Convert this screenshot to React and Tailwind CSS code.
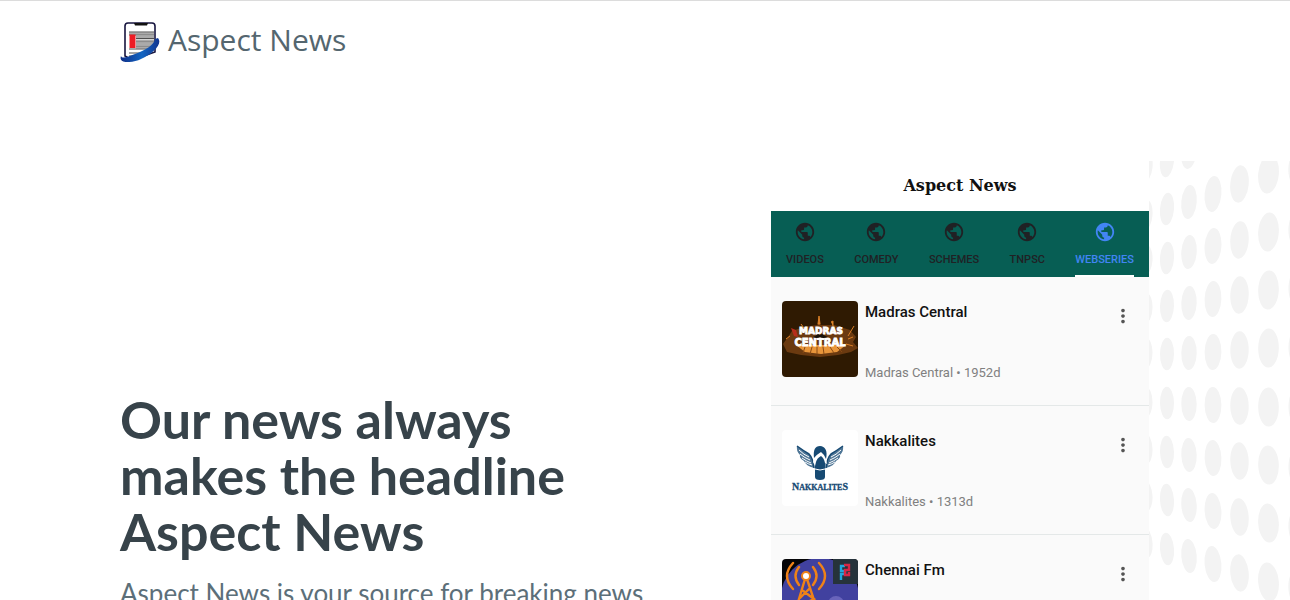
import { MdMoreVert, MdPublic } from "react-icons/md";

const tabs = ["VIDEOS", "COMEDY", "SCHEMES", "TNPSC", "WEBSERIES"];

const dotColumns = [
  { x: -3, rx: 6.5, ry: 15, ys: [6, 54, 99, 147, 192, 241, 288, 335, 382] },
  { x: 18, rx: 7, ry: 16.3, ys: [0, 48, 97, 145, 193, 242, 291, 339, 388] },
  { x: 40, rx: 7.7, ry: 17, ys: [-9, 41, 91, 142, 192, 243, 294, 344, 395] },
  { x: 64, rx: 8.4, ry: 18, ys: [33, 85, 138, 191, 244, 297, 350, 403] },
  { x: 90.5, rx: 9.2, ry: 18.7, ys: [23, 79, 134, 189, 245, 300, 356, 412] },
  { x: 119.5, rx: 10.3, ry: 19.6, ys: [13, 71, 129, 187, 246, 304, 362, 421] },
  { x: 151, rx: 11.5, ry: 21, ys: [6, 67, 126, 186, 246, 307, 367, 428] },
];

function Logo() {
  return (
    <svg viewBox="0 0 40 40" className="size-10 shrink-0" aria-hidden="true">
      <path d="M5 34V4q0-3 3-3h24q3 0 3 3v26L12 38Z" fill="#fff" stroke="#17153f" strokeWidth="1.6" />
      <path d="M14 1h14l-1 2.5H15Z" fill="#111" />
      <path d="M9 11.5h25M16 15h18M16 18.5h18M16 22h18M16 25.5h18" stroke="#aaa" strokeWidth="2" />
      <path d="M9 10h25M9 13h25M16 16.5h18M16 20h18M16 24h18M9 27h25M9 31h15M9 34h8" stroke="#222" strokeWidth=".8" />
      <path d="M9.5 12.5h6V26h-6Z" fill="#ed1c24" />
      <path
        d="M1 34c1 3 7 1 14-2 11-4 19-9 20-15l3-1c5 6-5 16-17 21C13 41-2 42 1 34Z"
        fill="url(#swoosh)"
      />
      <defs>
        <linearGradient id="swoosh">
          <stop stopColor="#102f88" />
          <stop offset=".55" stopColor="#1265c2" />
          <stop offset="1" stopColor="#12358f" />
        </linearGradient>
      </defs>
    </svg>
  );
}

function MadrasThumb() {
  return (
    <svg viewBox="0 0 76 76" className="size-[76px] rounded-sm" aria-hidden="true">
      <rect width="76" height="76" fill="#2f1a02" />
      <path d="m1 43 5-7 4-6 12-4 13-2 2-4 2 4 13 0 16 5 6 7-3 5 5 6-7 4-13 3-18 2-19-2-14-3Z" fill="#6b3a10" />
      <path d="M14 44h50l-9 7-16 2-16-2Z" fill="#e8953a" />
      <path d="m23 46-2 6m9-6-2 7m7-7v7m6-7 1 7m6-7 4 6m3-6 5 5" stroke="#8a4a14" strokeWidth="1" />
      <path d="m37 15 1 8h-2Zm12 6 2-1v5m-32-2 3 4m50-2-6 10M4 38l4-3m58 3 5-2m-7 7 7 2" stroke="#d97f27" strokeWidth="1" fill="#e48b2e" />
      <path d="m9 27 5 2 2 7-4-1Z" fill="#b52d1b" />
      <g fontFamily="DejaVu Sans, sans-serif" fontWeight="700" fill="#fff" stroke="#fff" strokeWidth=".8" textAnchor="middle">
        <text x="39" y="33" fontSize="9">MADRAS</text>
        <text x="38" y="45" fontSize="10">CENTRAL</text>
      </g>
      <path d="M31 36q3-1 5-3l2 1 2-1q3 2 6 3-5 2-8 0-3 2-7 0" fill="#17100a" />
    </svg>
  );
}

function NakkalitesThumb() {
  return (
    <svg viewBox="0 0 76 76" className="size-[76px] rounded-sm" aria-hidden="true">
      <rect width="76" height="76" fill="#fff" />
      <path d="M15 16q7 5 12 8 4 4 5 14-8-2-10-7-5-3-4-6-4-4-3-9ZM61 16q-7 5-12 8-4 4-5 14 8-2 10-7 5-3 4-6 4-4 3-9Z" fill="#4f7696" />
      <path
        d="M17 20q5 5 10 7M18 24q5 4 10 6M20 28q4 3 9 5M23 32q3 2 7 3M59 20q-5 5-10 7M58 24q-5 4-10 6M56 28q-4 3-9 5M53 32q-3 2-7 3"
        fill="none"
        stroke="#fff"
      />
      <path
        d="M15 16q7 5 12 8 4 4 5 14M61 16q-7 5-12 8-4 4-5 14"
        fill="none"
        stroke="#174a73"
        strokeWidth="1.5"
      />
      <path d="M32 28c-1-8 1-12 6-12s8 5 6 13l-1 11v7q0 3-5 3t-5-3v-7Z" fill="#174a73" />
      <path d="m31 32 1-4q2-3 7-6 4 3 5 7l1 5-2-1q-1-5-4-7-4 2-5 6l-1 4Z" fill="#fff" />
      <path d="M33 39q5 2 10 0" fill="none" stroke="#fff" />
      <text x="38" y="60" fontSize="8" fontFamily="Liberation Serif, serif" fontWeight="700" fill="#174a73" stroke="#174a73" strokeWidth=".3" textAnchor="middle">
        <tspan fontSize="10">N</tspan>AKKALITE<tspan fontSize="10">S</tspan>
      </text>
    </svg>
  );
}

function ChennaiThumb() {
  return (
    <svg viewBox="0 0 76 76" className="size-[76px] rounded-sm" aria-hidden="true">
      <rect width="76" height="76" fill="#050508" />
      <circle cx="38" cy="38" r="39" fill="#41419f" />
      <circle cx="54" cy="45" r="8" fill="#6964bb" />
      <path d="M51 0h25v25H51Z" fill="#26333b" />
      <path d="M63 7h-4v5h4v3h-4v6" fill="none" stroke="#20a8dc" strokeWidth="2.4" />
      <path d="M62 6h5v5h-4v5h4v-3" fill="none" stroke="#d72645" strokeWidth="2.4" />
      <g fill="none" stroke="#ef8218" strokeWidth="2.4" strokeLinecap="round">
        <path d="M11 4q-12 13 0 26M17 8q-7 9 0 18M37 4q12 13 0 26M31 8q7 9 0 18" />
        <path d="m23 20-9 30m11-30 10 30M20 31l12 9-15 7M28 29l-10 10" />
      </g>
      <circle cx="24" cy="17" r="4" fill="#fff" stroke="#ef8218" strokeWidth="2" />
    </svg>
  );
}

const channels = [
  { name: "Madras Central", age: "1952d", Thumb: MadrasThumb },
  { name: "Nakkalites", age: "1313d", Thumb: NakkalitesThumb },
  { name: "Chennai Fm", Thumb: ChennaiThumb },
];

function Phone() {
  return (
    <section className="w-[378px] shrink-0 bg-[#fafafa] font-['Roboto',sans-serif]">
      <h2 className="bg-white py-[11px] text-center font-['DejaVu_Serif',serif] text-base leading-7 font-bold text-[#111]">
        Aspect News
      </h2>
      <nav className="flex justify-between bg-[#075e54] px-[15px]">
        {tabs.map((tab) => (
          <button
            key={tab}
            className={
              tab === "WEBSERIES"
                ? "flex h-[66px] flex-col items-center border-b-2 border-white pt-[10px] text-[11px] leading-[18px] font-medium text-[#4285f4]"
                : "flex h-[66px] flex-col items-center border-b-2 border-transparent pt-[10px] text-[11px] leading-[18px] font-medium text-[#202124]"
            }
          >
            <MdPublic className="mb-2 size-[22px]" />
            {tab}
          </button>
        ))}
      </nav>
      <ul>
        {channels.map(({ name, age, Thumb }) => (
          <li key={name} className="flex items-start border-b border-[#e4e8e8] px-[11px] pt-6 pb-[22px]">
            <Thumb />
            <div className="ml-[7px] flex h-[82px] flex-1 flex-col justify-between">
              <h3 className="text-[15px] leading-[22px] font-medium text-[#111]">{name}</h3>
              {age && (
                <p className="text-[13px] leading-5 text-[#808080]">
                  {name} • {age}
                </p>
              )}
            </div>
            <button aria-label={"More about " + name} className="mt-1 mr-1 text-[#555]">
              <MdMoreVert className="size-[22px]" />
            </button>
          </li>
        ))}
      </ul>
    </section>
  );
}

function Dots() {
  return (
    <svg viewBox="0 0 141 439" className="h-[439px] w-[141px] shrink-0" aria-hidden="true">
      {dotColumns.map((col) =>
        col.ys.map((y) => (
          <ellipse
            key={col.x + "-" + y}
            cx={col.x}
            cy={y}
            rx={col.rx}
            ry={col.ry}
            fill="#f3f3f3"
            transform={`rotate(${(220 - y) / 35} ${col.x} ${y})`}
          />
        ))
      )}
    </svg>
  );
}

export default function App() {
  return (
    <div className="h-screen overflow-hidden border-t border-[#dcdcdc] bg-white">
      <header className="flex h-[82px] items-center px-[120px]">
        <a href="#" className="flex items-center gap-2 font-['Open_Sans',sans-serif] text-[30px] leading-9 font-medium text-[#54666f]">
          <Logo />
          <span className="pb-1">Aspect News</span>
        </a>
      </header>
      <main className="flex items-start pt-[78px] pl-[120px]">
        <div className="min-w-0 flex-1 pt-[230px] font-['Lato',sans-serif]">
          <h1 className="text-[52px] leading-14 font-bold text-[#37434a]">
            Our news always
            <br />
            makes the headline
            <br />
            Aspect News
          </h1>
          <p className="mt-4 text-[26px] leading-9 text-[#5c6f79]">
            Aspect News is your source for breaking news
          </p>
        </div>
        <Phone />
        <Dots />
      </main>
    </div>
  );
}
